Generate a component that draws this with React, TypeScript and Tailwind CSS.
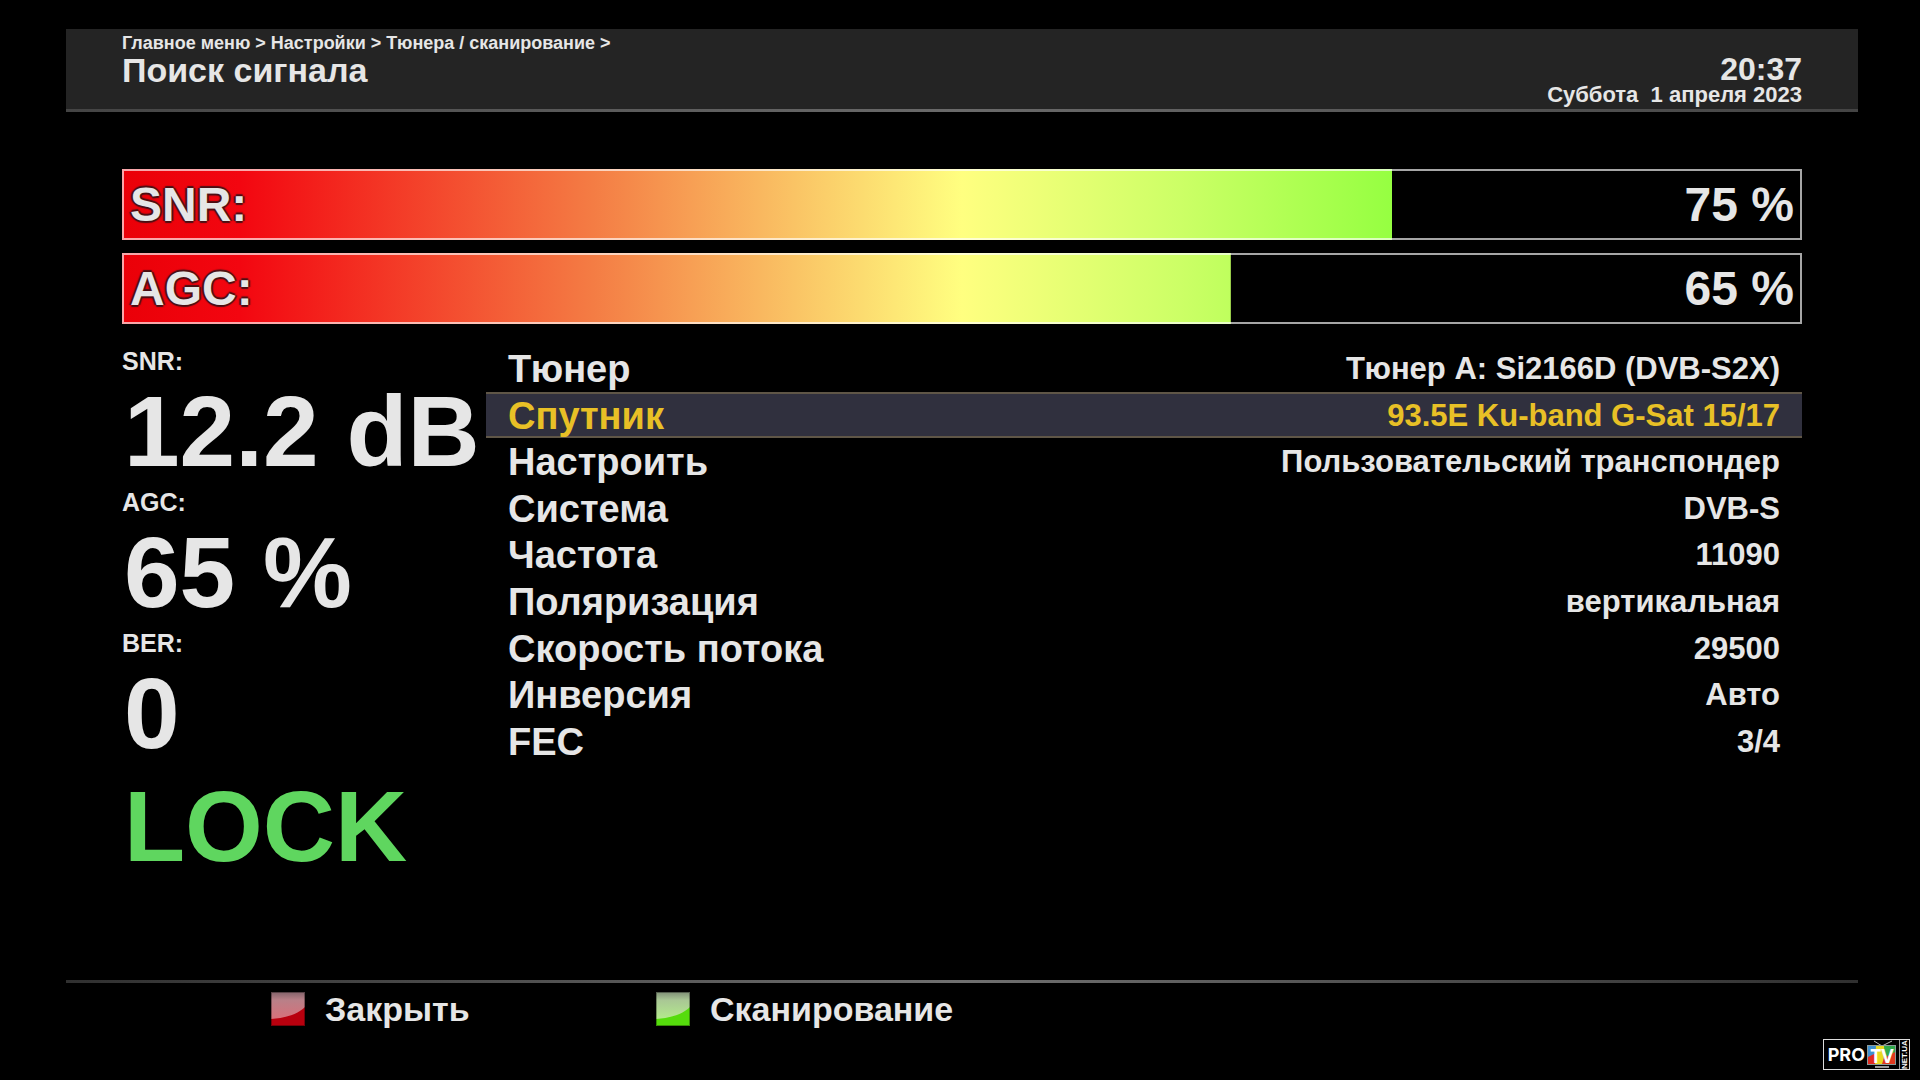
import React, { useState } from 'react';

interface Meter {
  label: string;
  value: number;
  fill: number;
}

interface Setting {
  label: string;
  value: string;
}

const meters: Meter[] = [
  { label: 'SNR:', value: 75, fill: 75.6 },
  { label: 'AGC:', value: 65, fill: 66 },
];

const readings = [
  { label: 'SNR:', value: '12.2 dB' },
  { label: 'AGC:', value: '65 %' },
  { label: 'BER:', value: '0' },
];

const settings: Setting[] = [
  { label: 'Тюнер', value: 'Тюнер A: Si2166D (DVB-S2X)' },
  { label: 'Спутник', value: '93.5E Ku-band G-Sat 15/17' },
  { label: 'Настроить', value: 'Пользовательский транспондер' },
  { label: 'Система', value: 'DVB-S' },
  { label: 'Частота', value: '11090' },
  { label: 'Поляризация', value: 'вертикальная' },
  { label: 'Скорость потока', value: '29500' },
  { label: 'Инверсия', value: 'Авто' },
  { label: 'FEC', value: '3/4' },
];

function Header() {
  return (
    <header>
      <div className="flex h-20 justify-between bg-[#242424] px-14">
        <div className="pt-0.5">
          <nav className="text-lg leading-6">
            <a href="#main">Главное меню</a> &gt; <a href="#settings">Настройки</a> &gt;{' '}
            <a href="#tuners">Тюнера / сканирование</a> &gt;
          </nav>
          <h1 className="text-[34px] leading-[30px]">Поиск сигнала</h1>
        </div>
        <div className="pt-6 text-right">
          <div className="text-[32px] leading-8">20:37</div>
          <div className="text-[22px] leading-5 whitespace-pre">Суббота  1 апреля 2023</div>
        </div>
      </div>
      <div className="h-[3px] bg-linear-to-r from-[#444444] via-[#6a6a6a] to-[#444444]" />
    </header>
  );
}

function SignalBar({ label, value, fill }: Meter) {
  return (
    <div
      role="meter"
      aria-label={label}
      aria-valuenow={value}
      aria-valuemin={0}
      aria-valuemax={100}
      className="grid h-[71px] text-5xl"
    >
      <div
        className="col-start-1 row-start-1 bg-[linear-gradient(90deg,#ea0008_0%,#f30610_7%,#f47c44_28%,#ffff80_50%,#ccff66_63%,#94ff40_76%)]"
        style={{ clipPath: `inset(0 ${100 - fill}% 0 0)` }}
      />
      {/* the frame and texts are painted over the clipped gradient */}
      <div className="relative col-start-1 row-start-1 flex items-center justify-between border-2 border-white/65 px-1.5">
        <span className="[text-shadow:2px_0_1px_#4a1015,-2px_0_1px_#4a1015,0_2px_1px_#4a1015,0_-2px_1px_#4a1015]">
          {label}
        </span>
        <span>{value} %</span>
      </div>
    </div>
  );
}

function Readings() {
  return (
    <div className="w-[364px] shrink-0 pt-0.5 whitespace-nowrap">
      <dl>
        {readings.map((r) => (
          <div key={r.label}>
            <dt className="text-[25px] leading-7">{r.label}</dt>
            <dd className="pl-0.5 text-[100px] leading-[113px]">{r.value}</dd>
          </div>
        ))}
      </dl>
      <div className="pl-0.5 text-[100px] leading-[113px] text-[#5fd65f]">LOCK</div>
    </div>
  );
}

function SettingsList() {
  const [selected, setSelected] = useState(1);

  return (
    <ul className="grid h-[419px] flex-1 auto-rows-fr">
      {settings.map((s, i) => (
        <li key={s.label} className="flex">
          <button
            onClick={() => setSelected(i)}
            className={`flex w-full items-center justify-between border-y-2 px-[22px] pt-0.5 ${
              i === selected ? 'border-[#5f5647] bg-[#30303e] text-[#e8c026]' : 'border-transparent'
            }`}
          >
            <span className="text-[38px] leading-10">{s.label}</span>
            <span className="text-[31px] leading-10">{s.value}</span>
          </button>
        </li>
      ))}
    </ul>
  );
}

interface ColorKeyProps {
  label: string;
  color: 'red' | 'green';
}

function ColorKey({ label, color }: ColorKeyProps) {
  return (
    <button className="flex w-[385px] items-center gap-5 text-[34px] leading-9">
      <svg width="34" height="34" viewBox="0 0 34 34" aria-hidden="true">
        <defs>
          <linearGradient id={`gloss-${color}`} x1="0" y1="0" x2="0" y2="1">
            <stop offset="0" stopColor={color === 'red' ? '#83636a' : '#7f8f76'} />
            <stop offset="0.3" stopColor={color === 'red' ? '#b98088' : '#a9c795'} />
            <stop offset="1" stopColor={color === 'red' ? '#d8707a' : '#b4ea8c'} />
          </linearGradient>
        </defs>
        <rect width="34" height="34" fill={color === 'red' ? '#b8000e' : '#55dc0c'} />
        <path d="M0 0H34V15C27 22 15 26 0 27Z" fill={`url(#gloss-${color})`} />
        <rect x="0.5" y="0.5" width="33" height="33" fill="none" stroke="#000" strokeOpacity="0.35" />
      </svg>
      {label}
    </button>
  );
}

function Watermark() {
  return (
    <div className="absolute right-2.5 bottom-2.5 flex h-[31px] items-center gap-0.5 border border-[#dddddd] bg-black pl-1 text-white">
      <span className="font-['Inter',sans-serif] text-lg leading-5">PRO</span>
      <svg width="30" height="29" viewBox="0 0 30 29" aria-hidden="true">
        <path d="M7 1L15 6L25 1" fill="none" stroke="#bbb" />
        <rect x="0" y="5" width="29" height="20" fill="#8a9a98" />
        <path d="M1 6H11L5 24H1Z" fill="#3f8fd0" />
        <path d="M1 17L13 11L10 24H1Z" fill="#e02a20" />
        <path d="M9 6H18L16 24H8Z" fill="#e8d820" />
        <path d="M17 6H28V16L18 21Z" fill="#2fa84a" />
        <path d="M17 18L28 12V24H15Z" fill="#e03a20" />
        <path d="M8 27H22" stroke="#999" strokeWidth="2" />
        <text x="15" y="23" textAnchor="middle" fontSize="19" fontWeight="700" fontFamily="Open Sans, sans-serif" fill="#fff">
          TV
        </text>
      </svg>
      <span className="h-full rotate-180 border-r border-[#999999] text-center text-[8px] leading-[9px] [writing-mode:vertical-rl]">
        NET.UA
      </span>
    </div>
  );
}

function App() {
  return (
    <div className="relative flex min-h-screen flex-col bg-black pt-[29px] pr-[62px] pl-[66px] font-['Liberation_Sans',Arial,sans-serif] font-bold text-[#e6e6e6]">
      <Header />
      <main className="flex-1 px-14 pt-[57px]">
        <div className="flex flex-col gap-[13px]">
          {meters.map((m) => (
            <SignalBar key={m.label} {...m} />
          ))}
        </div>
        <div className="mt-[21px] flex">
          <Readings />
          <SettingsList />
        </div>
      </main>
      <footer className="h-[100px]">
        <div className="h-[3px] bg-linear-to-r from-[#303030] via-[#707070] to-[#303030]" />
        <div className="flex pt-2 pl-[205px]">
          <ColorKey label="Закрыть" color="red" />
          <ColorKey label="Сканирование" color="green" />
        </div>
      </footer>
      <Watermark />
    </div>
  );
}

export default App;
